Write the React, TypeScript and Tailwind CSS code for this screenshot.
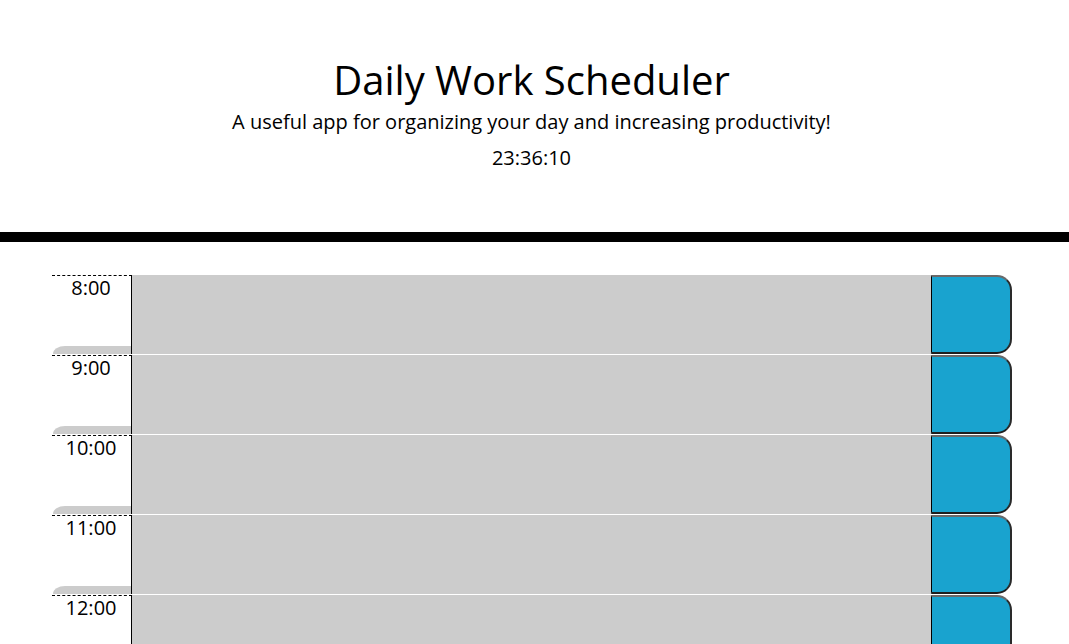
import React from "react";

const hours = ["8:00", "9:00", "10:00", "11:00", "12:00", "13:00", "14:00", "15:00", "16:00", "17:00"];

export default function App() {
  return (
    <div className="min-h-screen bg-white text-black" style={{ fontFamily: '"Open Sans", sans-serif' }}>
      <header className="flex flex-col items-center border-b-[10px] border-black pt-[54px] pb-[59px] mb-[32px] pr-[6px]">
        <h1 className="text-[40px] leading-[52px] font-normal">Daily Work Scheduler</h1>
        <p className="text-[20px] leading-[30px] mt-[1px]">A useful app for organizing your day and increasing productivity!</p>
        <p className="text-[20px] leading-[30px] mt-[6px]">23:36:10</p>
      </header>
      <div className="ml-[52px] w-[960px]">
        {hours.map((h) => (
          <div key={h} className="flex h-[80px] border-t border-white">
            <div className="relative w-[80px] border-t border-r border-black [border-top-style:dashed]">
              <div className="text-center text-[20px] leading-[20px] pt-[2px] pr-[1px]">{h}</div>
              <div className="absolute left-[1px] right-0 bottom-0 h-[8px] bg-[#cccccc] rounded-tl-[12px_8px]" />
            </div>
            <div className="flex-1 bg-[#cccccc]" />
            <div className="w-[81px] h-[79px] bg-[#19a3cf] border-l border-l-black border-t-2 border-t-[#6a6a6a] border-r-2 border-r-[#2a2a2a] border-b-2 border-b-[#1e1e1e] rounded-r-[15px]" />
          </div>
        ))}
      </div>
    </div>
  );
}
